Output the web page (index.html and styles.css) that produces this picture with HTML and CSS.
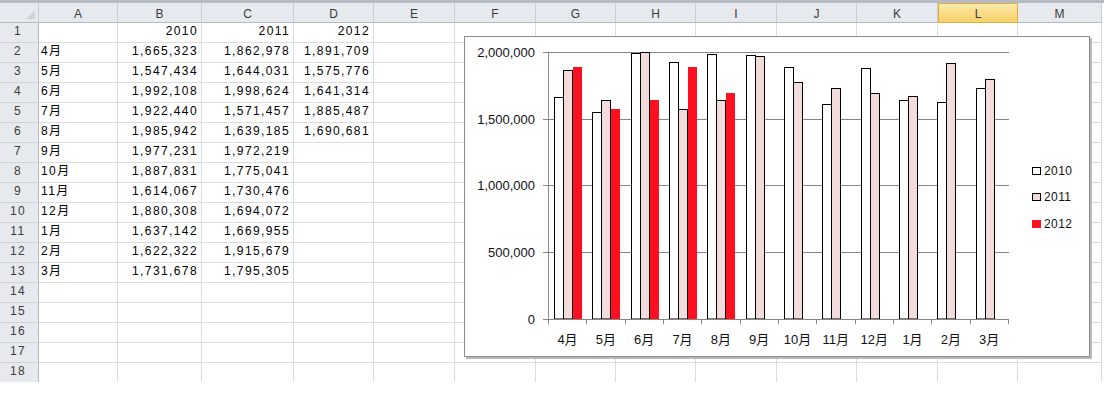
FILE: index.html
```html
<!DOCTYPE html>
<html lang="ja">
<head>
<meta charset="UTF-8">
<title>月別売上</title>
<link rel="stylesheet" href="styles.css">
</head>
<body>
<div class="book">
  <div class="band"></div>
  <div class="sheet">
    <div class="corner"></div><div class="col">A</div><div class="col">B</div><div class="col">C</div><div class="col">D</div><div class="col">E</div><div class="col">F</div><div class="col">G</div><div class="col">H</div><div class="col">I</div><div class="col">J</div><div class="col">K</div><div class="col sel">L</div><div class="col">M</div>

    <div class="rh">1</div><div class="c"></div><div class="c n">2010</div><div class="c n">2011</div><div class="c n">2012</div><div class="c"></div><div class="c"></div><div class="c"></div><div class="c"></div><div class="c"></div><div class="c"></div><div class="c"></div><div class="c"></div><div class="c"></div>
    <div class="rh">2</div><div class="c">4月</div><div class="c n">1,665,323</div><div class="c n">1,862,978</div><div class="c n">1,891,709</div><div class="c"></div><div class="c"></div><div class="c"></div><div class="c"></div><div class="c"></div><div class="c"></div><div class="c"></div><div class="c"></div><div class="c"></div>
    <div class="rh">3</div><div class="c">5月</div><div class="c n">1,547,434</div><div class="c n">1,644,031</div><div class="c n">1,575,776</div><div class="c"></div><div class="c"></div><div class="c"></div><div class="c"></div><div class="c"></div><div class="c"></div><div class="c"></div><div class="c"></div><div class="c"></div>
    <div class="rh">4</div><div class="c">6月</div><div class="c n">1,992,108</div><div class="c n">1,998,624</div><div class="c n">1,641,314</div><div class="c"></div><div class="c"></div><div class="c"></div><div class="c"></div><div class="c"></div><div class="c"></div><div class="c"></div><div class="c"></div><div class="c"></div>
    <div class="rh">5</div><div class="c">7月</div><div class="c n">1,922,440</div><div class="c n">1,571,457</div><div class="c n">1,885,487</div><div class="c"></div><div class="c"></div><div class="c"></div><div class="c"></div><div class="c"></div><div class="c"></div><div class="c"></div><div class="c"></div><div class="c"></div>
    <div class="rh">6</div><div class="c">8月</div><div class="c n">1,985,942</div><div class="c n">1,639,185</div><div class="c n">1,690,681</div><div class="c"></div><div class="c"></div><div class="c"></div><div class="c"></div><div class="c"></div><div class="c"></div><div class="c"></div><div class="c"></div><div class="c"></div>
    <div class="rh">7</div><div class="c">9月</div><div class="c n">1,977,231</div><div class="c n">1,972,219</div><div class="c"></div><div class="c"></div><div class="c"></div><div class="c"></div><div class="c"></div><div class="c"></div><div class="c"></div><div class="c"></div><div class="c"></div><div class="c"></div>
    <div class="rh">8</div><div class="c">10月</div><div class="c n">1,887,831</div><div class="c n">1,775,041</div><div class="c"></div><div class="c"></div><div class="c"></div><div class="c"></div><div class="c"></div><div class="c"></div><div class="c"></div><div class="c"></div><div class="c"></div><div class="c"></div>
    <div class="rh">9</div><div class="c">11月</div><div class="c n">1,614,067</div><div class="c n">1,730,476</div><div class="c"></div><div class="c"></div><div class="c"></div><div class="c"></div><div class="c"></div><div class="c"></div><div class="c"></div><div class="c"></div><div class="c"></div><div class="c"></div>
    <div class="rh">10</div><div class="c">12月</div><div class="c n">1,880,308</div><div class="c n">1,694,072</div><div class="c"></div><div class="c"></div><div class="c"></div><div class="c"></div><div class="c"></div><div class="c"></div><div class="c"></div><div class="c"></div><div class="c"></div><div class="c"></div>
    <div class="rh">11</div><div class="c">1月</div><div class="c n">1,637,142</div><div class="c n">1,669,955</div><div class="c"></div><div class="c"></div><div class="c"></div><div class="c"></div><div class="c"></div><div class="c"></div><div class="c"></div><div class="c"></div><div class="c"></div><div class="c"></div>
    <div class="rh">12</div><div class="c">2月</div><div class="c n">1,622,322</div><div class="c n">1,915,679</div><div class="c"></div><div class="c"></div><div class="c"></div><div class="c"></div><div class="c"></div><div class="c"></div><div class="c"></div><div class="c"></div><div class="c"></div><div class="c"></div>
    <div class="rh">13</div><div class="c">3月</div><div class="c n">1,731,678</div><div class="c n">1,795,305</div><div class="c"></div><div class="c"></div><div class="c"></div><div class="c"></div><div class="c"></div><div class="c"></div><div class="c"></div><div class="c"></div><div class="c"></div><div class="c"></div>
    <div class="rh">14</div><div class="c"></div><div class="c"></div><div class="c"></div><div class="c"></div><div class="c"></div><div class="c"></div><div class="c"></div><div class="c"></div><div class="c"></div><div class="c"></div><div class="c"></div><div class="c"></div><div class="c"></div>
    <div class="rh">15</div><div class="c"></div><div class="c"></div><div class="c"></div><div class="c"></div><div class="c"></div><div class="c"></div><div class="c"></div><div class="c"></div><div class="c"></div><div class="c"></div><div class="c"></div><div class="c"></div><div class="c"></div>
    <div class="rh">16</div><div class="c"></div><div class="c"></div><div class="c"></div><div class="c"></div><div class="c"></div><div class="c"></div><div class="c"></div><div class="c"></div><div class="c"></div><div class="c"></div><div class="c"></div><div class="c"></div><div class="c"></div>
    <div class="rh">17</div><div class="c"></div><div class="c"></div><div class="c"></div><div class="c"></div><div class="c"></div><div class="c"></div><div class="c"></div><div class="c"></div><div class="c"></div><div class="c"></div><div class="c"></div><div class="c"></div><div class="c"></div>
    <div class="rh">18</div><div class="c"></div><div class="c"></div><div class="c"></div><div class="c"></div><div class="c"></div><div class="c"></div><div class="c"></div><div class="c"></div><div class="c"></div><div class="c"></div><div class="c"></div><div class="c"></div><div class="c"></div>
  </div>

  <!-- グラフ (座標はシート基準) -->
  <div class="chart">
    <svg width="624" height="319" viewBox="465 37 624 319">
      <g class="grid">
        <path d="M543 52.5H1009M543 119.5H1009M543 185.5H1009M543 252.5H1009"/>
      </g>
      <g class="y-lbl">
        <text x="535" y="57">2,000,000</text>
        <text x="535" y="124">1,500,000</text>
        <text x="535" y="190">1,000,000</text>
        <text x="535" y="257">500,000</text>
        <text x="535" y="324">0</text>
      </g>

      <g class="s2010">
        <rect x="554.5" y="97.5" width="9" height="221.5"/>
        <rect x="592.5" y="112.5" width="9" height="206.5"/>
        <rect x="631.5" y="53.5" width="9" height="265.5"/>
        <rect x="669.5" y="62.5" width="9" height="256.5"/>
        <rect x="707.5" y="54.5" width="9" height="264.5"/>
        <rect x="746.5" y="55.5" width="9" height="263.5"/>
        <rect x="784.5" y="67.5" width="9" height="251.5"/>
        <rect x="822.5" y="104.5" width="9" height="214.5"/>
        <rect x="861.5" y="68.5" width="9" height="250.5"/>
        <rect x="899.5" y="100.5" width="9" height="218.5"/>
        <rect x="937.5" y="102.5" width="9" height="216.5"/>
        <rect x="976.5" y="88.5" width="9" height="230.5"/>
      </g>
      <g class="s2011">
        <rect x="563.5" y="70.5" width="9" height="248.5"/>
        <rect x="601.5" y="100.5" width="9" height="218.5"/>
        <rect x="640.5" y="52.5" width="9" height="266.5"/>
        <rect x="678.5" y="109.5" width="9" height="209.5"/>
        <rect x="716.5" y="100.5" width="9" height="218.5"/>
        <rect x="755.5" y="56.5" width="9" height="262.5"/>
        <rect x="793.5" y="82.5" width="9" height="236.5"/>
        <rect x="831.5" y="88.5" width="9" height="230.5"/>
        <rect x="870.5" y="93.5" width="9" height="225.5"/>
        <rect x="908.5" y="96.5" width="9" height="222.5"/>
        <rect x="946.5" y="63.5" width="9" height="255.5"/>
        <rect x="985.5" y="79.5" width="9" height="239.5"/>
      </g>
      <g class="s2012">
        <rect x="573" y="67" width="9" height="252"/>
        <rect x="611" y="109" width="9" height="210"/>
        <rect x="650" y="100" width="9" height="219"/>
        <rect x="688" y="67" width="9" height="252"/>
        <rect x="726" y="93" width="9" height="226"/>
      </g>

      <g class="axis">
        <path d="M548.5 52V319M543 319.5H1009"/>
        <path d="M548.5 319v5M586.5 319v5M625.5 319v5M663.5 319v5M701.5 319v5M740.5 319v5M778.5 319v5M816.5 319v5M855.5 319v5M893.5 319v5M931.5 319v5M970.5 319v5M1008.5 319v5"/>
      </g>
      <g class="x-lbl">
        <text x="567.5" y="344">4月</text>
        <text x="605.8" y="344">5月</text>
        <text x="644.2" y="344">6月</text>
        <text x="682.5" y="344">7月</text>
        <text x="720.8" y="344">8月</text>
        <text x="759.2" y="344">9月</text>
        <text x="797.5" y="344">10月</text>
        <text x="835.8" y="344">11月</text>
        <text x="874.2" y="344">12月</text>
        <text x="912.5" y="344">1月</text>
        <text x="950.8" y="344">2月</text>
        <text x="989.2" y="344">3月</text>
      </g>

      <g class="legend">
        <rect class="k2010" x="1032.5" y="167.5" width="8" height="7"/>
        <text x="1044" y="175">2010</text>
        <rect class="k2011" x="1032.5" y="193.5" width="8" height="7"/>
        <text x="1044" y="201">2011</text>
        <rect class="k2012" x="1032" y="220" width="9" height="8"/>
        <text x="1044" y="228">2012</text>
      </g>
    </svg>
  </div>
</div>
</body>
</html>
```

FILE: styles.css
```css
body {
  margin: 0;
  background: #fff;
}

.book {
  position: relative;
  width: 1104px;
  height: 382px;
  overflow: hidden;
  font-family: "Liberation Sans", "Noto Sans CJK JP", sans-serif;
}

.band {
  height: 3px;
  background: #b6bcc4;
}

.sheet {
  display: grid;
  grid-template-columns: 39px 79px 84px 92px 80px 81px 81px 80px 80px 81px 80px 81px 80px 84px;
  grid-auto-rows: 20px;
  font-size: 12px;
  letter-spacing: 1.4px;
  color: #000;
}

.sheet div {
  box-sizing: border-box;
  overflow: hidden;
  white-space: nowrap;
  line-height: 17px;
}

.corner,
.col {
  background: #e6e9ed;
  border-right: 1px solid #c8cdd3;
  border-bottom: 1px solid #b3bac3;
}

.corner {
  position: relative;
}

.corner::after {
  content: "";
  position: absolute;
  right: 3px;
  bottom: 3px;
  border-style: solid;
  border-width: 0 0 9px 9px;
  border-color: transparent transparent #d0d4d9 transparent;
}

.sheet .col {
  text-align: center;
  color: #3c3c3c;
  padding-top: 2px;
  line-height: 18px;
  letter-spacing: 0;
}

.sheet .sel {
  background: linear-gradient(#fde9a9, #f8d169);
  border: 1px solid #eaab3e;
  padding-top: 1px;
}

.rh {
  background: #e6e9ed;
  border-right: 1px solid #b3bac3;
  border-bottom: 1px solid #d0d4d9;
  text-align: center;
  color: #3c3c3c;
  padding-right: 2px;
}

.c {
  border-right: 1px solid #dadcdd;
  border-bottom: 1px solid #dadcdd;
  padding-left: 2px;
}

.n {
  text-align: right;
  padding-right: 3px;
}

/* chart */
.chart {
  position: absolute;
  left: 464px;
  top: 36px;
  width: 624px;
  height: 319px;
  border: 1px solid #8c8c8c;
  background: #fff;
  box-shadow: 2px 2px 0 #b9b9b9;
}

.chart svg {
  display: block;
}

.grid path {
  stroke: #868686;
  stroke-width: 1;
  fill: none;
}

.axis path {
  stroke: #868686;
  stroke-width: 1;
  fill: none;
}

.y-lbl text {
  font: 13px "Liberation Sans", sans-serif;
  fill: #111;
  text-anchor: end;
}

.x-lbl text {
  font: 13px "Liberation Sans", "Noto Sans CJK JP", sans-serif;
  fill: #111;
  text-anchor: middle;
}

.s2010 rect,
.k2010 {
  fill: #fff;
  stroke: #000;
  stroke-width: 1;
}

.s2011 rect,
.k2011 {
  fill: #f2dcdb;
  stroke: #000;
  stroke-width: 1;
}

.s2012 rect,
.k2012 {
  fill: #ff1020;
}

.legend text {
  font: 12px "Liberation Sans", sans-serif;
  letter-spacing: 0.4px;
  fill: #111;
}
```
